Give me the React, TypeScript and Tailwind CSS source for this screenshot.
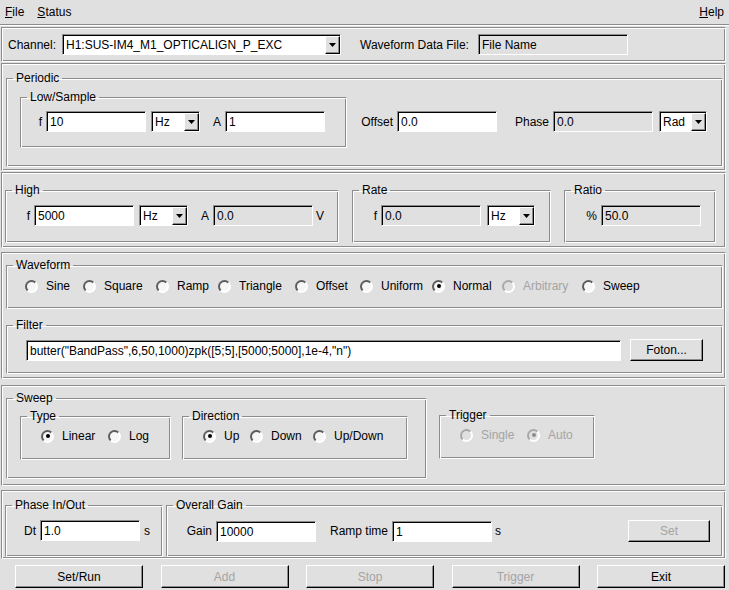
import type { ReactNode } from "react";

// ROOT-style bevels: sunken entry frame and etched panel/group frame.
const SUNK = "border border-t-[#8c8c8c] border-l-[#8c8c8c] border-r-white border-b-white shadow-[inset_1px_1px_0_#000]";
const ETCH =
  "border border-t-[#8c8c8c] border-l-[#8c8c8c] border-r-white border-b-white shadow-[inset_1px_1px_0_#fff,inset_-1px_-1px_0_#8c8c8c]";

function Panel({ className = "", children }: { className?: string; children: ReactNode }) {
  return <div className={`ml-px w-[725px] shrink-0 ${ETCH} ${className}`}>{children}</div>;
}

function Group({ title, className = "", children }: { title: string; className?: string; children?: ReactNode }) {
  return (
    <fieldset className={`shrink-0 ${ETCH} ${className}`}>
      <legend className="ml-[6px] px-[3px] leading-[13px]">{title}</legend>
      {children}
    </fieldset>
  );
}

function Label({ children, className = "" }: { children: ReactNode; className?: string }) {
  return <span className={`shrink-0 pr-[4px] text-right ${className}`}>{children}</span>;
}

function Field({ value, off, className = "w-[100px]" }: { value: string; off?: boolean; className?: string }) {
  return (
    <div className={`flex h-[21px] shrink-0 items-center pl-[3px] pt-px ${SUNK} ${off ? "bg-[#e0e0e0]" : "bg-white"} ${className}`}>
      {value}
    </div>
  );
}

function Combo({ value, className = "" }: { value: string; className?: string }) {
  return (
    <div className={`flex h-[21px] shrink-0 bg-white ${SUNK} ${className}`}>
      <span className="flex flex-1 items-center pl-[3px] pt-px">{value}</span>
      <span className="mt-px mb-0 grid w-[15px] place-items-center border border-t-white border-l-white border-r-black border-b-black bg-[#e0e0e0] shadow-[inset_-1px_-1px_0_#8c8c8c]">
        <svg width="7" height="4" viewBox="0 0 7 4">
          <path d="M0 0h7L3.5 4z" fill="#000" />
        </svg>
      </span>
    </div>
  );
}

function Btn({ children, off, className = "" }: { children: ReactNode; off?: boolean; className?: string }) {
  return (
    <button
      type="button"
      className={`grid shrink-0 place-items-center border border-t-white border-l-white border-r-black border-b-black bg-[#e0e0e0] shadow-[inset_-1px_-1px_0_#8c8c8c] ${off ? "text-[#a4a4a4]" : "text-black"} ${className}`}
    >
      {children}
    </button>
  );
}

function Radio({ label, on, off, className = "" }: { label: string; on?: boolean; off?: boolean; className?: string }) {
  return (
    <span className={`flex shrink-0 items-center ${className}`}>
      <span
        className={`grid size-[13px] place-items-center rounded-full border-2 border-r-white border-b-white ${
          off ? "border-t-[#a8a8a8] border-l-[#a8a8a8] bg-[#e0e0e0]" : "border-t-[#5c5c5c] border-l-[#5c5c5c] bg-[#f6f6f6]"
        }`}
      >
        {on && <span className={`size-[4px] rounded-full ${off ? "bg-[#8c8c8c]" : "bg-black"}`} />}
      </span>
      <span className={`ml-[8px] ${off ? "text-[#a4a4a4]" : ""}`}>{label}</span>
    </span>
  );
}

export default function App() {
  return (
    <div className="flex h-[590px] w-[729px] flex-col overflow-hidden bg-[#e0e0e0] font-['Liberation_Sans',Arial,sans-serif] text-[12px] leading-[14px] text-black">
      {/* menu bar */}
      <div className="flex h-[25px] shrink-0 items-center gap-[13px] border-b border-[#8c8c8c] px-[5px] shadow-[0_1px_0_#fff]">
        <span>
          <u>F</u>ile
        </span>
        <span>
          <u>S</u>tatus
        </span>
        <span className="ml-auto">
          <u>H</u>elp
        </span>
      </div>

      {/* channel */}
      <Panel className="mt-[2px] flex h-[35px] items-center pl-[6px]">
        <span className="w-[54px] shrink-0">Channel:</span>
        <Combo value="H1:SUS-IM4_M1_OPTICALIGN_P_EXC" className="w-[279px]" />
        <span className="ml-[19px] w-[118px] shrink-0">Waveform Data File:</span>
        <Field value="File Name" off className="w-[150px]" />
      </Panel>

      {/* periodic */}
      <Panel className="mt-px h-[108px]">
        <Group title="Periodic" className="mt-[8px] ml-[4px] h-[95px] w-[717px]">
          <div className="flex items-start">
            <Group title="Low/Sample" className="mt-[6px] ml-[13px] h-[57px] w-[327px]">
              <div className="mt-[7px] flex items-center">
                <Label className="w-[25px]">f</Label>
                <Field value="10" />
                <Combo value="Hz" className="ml-[5px] w-[49px]" />
                <Label className="w-[25px]">A</Label>
                <Field value="1" />
              </div>
            </Group>
            <div className="mt-[26px] flex items-center">
              <Label className="w-[50px]">Offset</Label>
              <Field value="0.0" />
              <Label className="w-[56px]">Phase</Label>
              <Field value="0.0" off />
              <Combo value="Rad" className="ml-[6px] w-[48px]" />
            </div>
          </div>
        </Group>
      </Panel>

      {/* high / rate / ratio */}
      <Panel className="mt-px flex h-[76px] items-start">
        <Group title="High" className="mt-[11px] ml-[3px] h-[59px] w-[334px]">
          <div className="mt-[8px] flex items-center">
            <Label className="w-[28px]">f</Label>
            <Field value="5000" />
            <Combo value="Hz" className="ml-[5px] w-[49px]" />
            <Label className="w-[25px]">A</Label>
            <Field value="0.0" off />
            <span className="ml-[3px]">V</span>
          </div>
        </Group>
        <Group title="Rate" className="mt-[11px] ml-[13px] h-[59px] w-[199px]">
          <div className="mt-[8px] flex items-center">
            <Label className="w-[28px]">f</Label>
            <Field value="0.0" off />
            <Combo value="Hz" className="ml-[6px] w-[48px]" />
          </div>
        </Group>
        <Group title="Ratio" className="mt-[11px] ml-[13px] h-[59px] w-[152px]">
          <div className="mt-[8px] flex items-center">
            <Label className="w-[36px]">%</Label>
            <Field value="50.0" off />
          </div>
        </Group>
      </Panel>

      {/* waveform + filter */}
      <Panel className="mt-[4px] h-[127px]">
        <Group title="Waveform" className="mt-[6px] ml-[4px] h-[50px] w-[717px]">
          <div className="mt-[7px] flex h-[14px] items-center pl-[18px]">
            <Radio label="Sine" className="w-[58px]" />
            <Radio label="Square" className="w-[73px]" />
            <Radio label="Ramp" className="w-[62px]" />
            <Radio label="Triangle" className="w-[77px]" />
            <Radio label="Offset" className="w-[65px]" />
            <Radio label="Uniform" className="w-[72px]" />
            <Radio label="Normal" on className="w-[70px]" />
            <Radio label="Arbitrary" off className="w-[80px]" />
            <Radio label="Sweep" />
          </div>
        </Group>
        <Group title="Filter" className="mt-[10px] ml-[4px] h-[55px] w-[717px]">
          <div className="mt-[7px] flex items-center">
            <Field value={'butter("BandPass",6,50,1000)zpk([5;5],[5000;5000],1e-4,"n")'} className="ml-[19px] w-[595px]" />
            <Btn className="ml-[9px] h-[22px] w-[73px]">Foton...</Btn>
          </div>
        </Group>
      </Panel>

      {/* sweep */}
      <Panel className="mt-[6px] flex h-[101px] items-start">
        <Group title="Sweep" className="mt-[6px] ml-[4px] h-[87px] w-[421px]">
          <div className="flex items-start">
            <Group title="Type" className="mt-[5px] ml-[13px] h-[50px] w-[151px]">
              <div className="mt-[6px] flex h-[14px] items-center pl-[20px]">
                <Radio label="Linear" on className="w-[67px]" />
                <Radio label="Log" />
              </div>
            </Group>
            <Group title="Direction" className="mt-[5px] ml-[11px] h-[50px] w-[226px]">
              <div className="mt-[6px] flex h-[14px] items-center pl-[20px]">
                <Radio label="Up" on className="w-[47px]" />
                <Radio label="Down" className="w-[63px]" />
                <Radio label="Up/Down" />
              </div>
            </Group>
          </div>
        </Group>
        <Group title="Trigger" className="mt-[23px] ml-[12px] h-[50px] w-[156px]">
          <div className="mt-[6px] flex h-[14px] items-center pl-[20px]">
            <Radio label="Single" off className="w-[67px]" />
            <Radio label="Auto" on off />
          </div>
        </Group>
      </Panel>

      {/* phase / gain */}
      <Panel className="mt-[4px] flex h-[69px] items-start">
        <Group title="Phase In/Out" className="mt-[8px] ml-[3px] h-[58px] w-[158px]">
          <div className="mt-[8px] flex items-center">
            <Label className="w-[34px]">Dt</Label>
            <Field value="1.0" />
            <span className="ml-[4px]">s</span>
          </div>
        </Group>
        <Group title="Overall Gain" className="mt-[8px] ml-[3px] h-[58px] w-[557px]">
          <div className="mt-[8px] flex items-center">
            <Label className="w-[49px]">Gain</Label>
            <Field value="10000" />
            <Label className="w-[76px]">Ramp time</Label>
            <Field value="1" />
            <span className="ml-[3px]">s</span>
            <Btn off className="mr-[12px] ml-auto h-[22px] w-[82px]">
              Set
            </Btn>
          </div>
        </Group>
      </Panel>

      {/* command buttons */}
      <div className="mt-[6px] flex shrink-0 gap-[17.5px] pl-[15px]">
        <Btn className="h-[23px] w-[128px]">Set/Run</Btn>
        <Btn off className="h-[23px] w-[128px]">
          Add
        </Btn>
        <Btn off className="h-[23px] w-[128px]">
          Stop
        </Btn>
        <Btn off className="h-[23px] w-[128px]">
          Trigger
        </Btn>
        <Btn className="h-[23px] w-[128px]">Exit</Btn>
      </div>
    </div>
  );
}
